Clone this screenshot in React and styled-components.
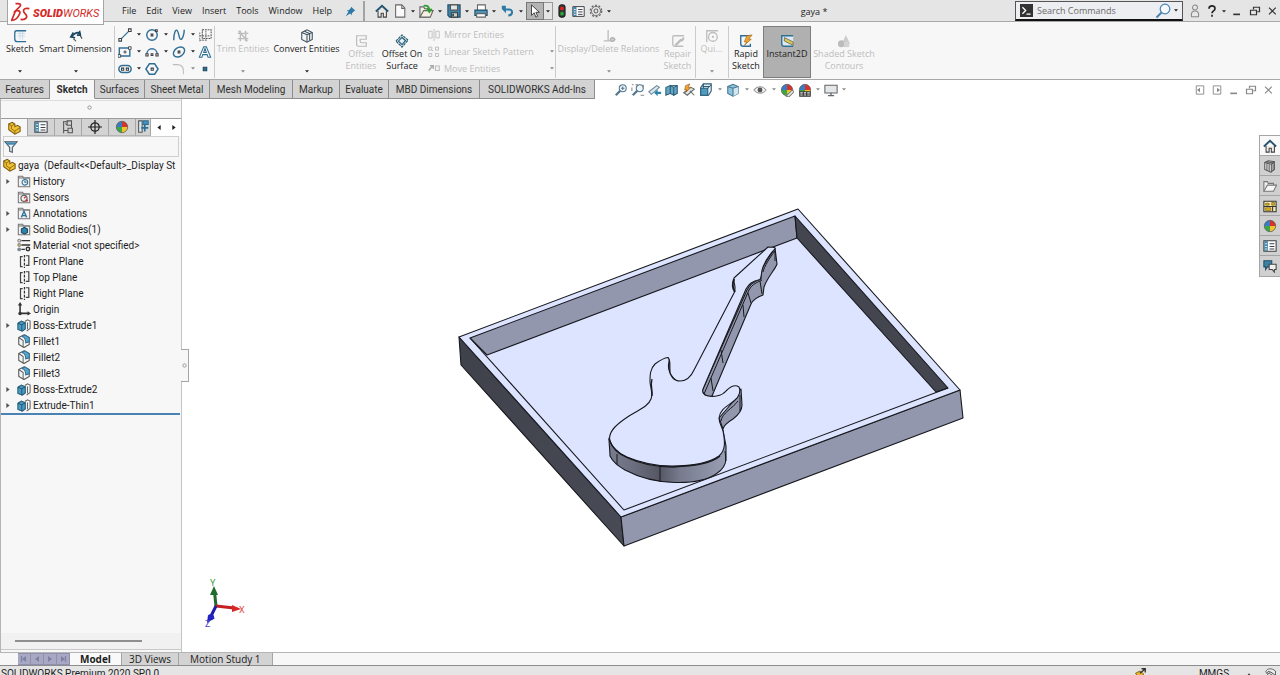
import React from 'react';
import styled, { createGlobalStyle, css } from 'styled-components';

const ui = '"Open Sans", "Noto Sans", sans-serif';
const body = 'Roboto, "Noto Sans", sans-serif';
const blue = '#2f6f96';
const dark = '#3b3f44';
const dim = '#bdbdbd';

const GlobalStyle = createGlobalStyle`
  *, *::before, *::after { box-sizing: border-box; }
  html, body { margin: 0; height: 100%; overflow: hidden; }
  body { background: #fff; color: #1c1c1c; font-family: ${body}; font-size: 10px; }
  button, input { font: inherit; color: inherit; margin: 0; padding: 0; border: 0; background: none; }
  ul { list-style: none; margin: 0; padding: 0; }
  svg { display: block; flex: none; }
`;

const Shell = styled.div`
  display: flex;
  flex-direction: column;
  height: 100vh;
  overflow: hidden;
`;

/* ---------- title bar ---------- */
const TitleBar = styled.header`
  position: relative;
  display: flex;
  align-items: center;
  flex: none;
  height: 22px;
  padding: 1px 0 0 117px;
  background: #e5e5e5;
  border-bottom: 1px solid #a8a8a8;
  font-family: ${ui};
  font-size: 9px;
`;
const Logo = styled.a`
  position: absolute;
  z-index: 2;
  left: 7px;
  top: 0;
  width: 97px;
  height: 25px;
  display: flex;
  align-items: center;
  gap: 3px;
  padding-left: 3px;
  background: #fff;
  border: 1px solid #a5a5a5;
  border-top: 0;
  color: #d42a26;
  text-decoration: none;
  font: italic 11px/24px Roboto, sans-serif;
  span { padding-top: 3px; }
  b { font-weight: 900; }
`;
const Menu = styled.nav`
  display: flex;
  flex: none;
  button { padding: 0 5px; line-height: 20px; }
`;
const QuickTools = styled.div`
  display: flex;
  align-items: center;
  flex: none;
  height: 20px;
  padding-left: 8px;
  border-left: 2px solid #a3a3a3;
`;
const IconButton = styled.button`
  display: flex;
  align-items: center;
  justify-content: center;
  flex: none;
  width: ${(p) => p.$w || 18}px;
  height: ${(p) => p.$h || 18}px;
  ${(p) => p.$on && css`background: #b4b4b4; border: 1px solid #777;`}
  ${(p) => p.$boxed && css`border: 1px solid #999; border-left: 0;`}
`;
const DocTitle = styled.h1`
  flex: 1;
  margin: 0;
  text-align: center;
  font-size: 9px;
  font-weight: 400;
`;
const Search = styled.form`
  display: flex;
  align-items: center;
  flex: none;
  width: 168px;
  height: 20px;
  padding: 0 2px 0 4px;
  background: #eceef1;
  border: 1px solid #555;
  border-bottom: 2px solid #111;
  input { flex: 1; min-width: 0; padding-left: 4px; outline: 0; }
  input::placeholder { color: #6b6b6b; opacity: 1; }
`;
const WindowTools = styled.div`
  display: flex;
  align-items: center;
  flex: none;
  padding-left: 3px;
`;

/* ---------- ribbon ---------- */
const Ribbon = styled.section`
  display: flex;
  flex: none;
  height: 58px;
  padding-top: 4px;
  padding-left: 2px;
  background: #f7f7f7;
  border-bottom: 1px solid #a8a8a8;
  font-family: ${ui};
  font-size: 9px;
`;
const Group = styled.div`
  display: flex;
  flex: none;
  height: 52px;
  padding-right: ${(p) => p.$pad || 1}px;
  margin-right: 1px;
  gap: 1px;
  border-right: ${(p) => (p.$last ? 0 : 1)}px solid #cbcbcb;
`;
const BigTool = styled.button`
  display: flex;
  flex-direction: column;
  align-items: center;
  width: ${(p) => p.$w}px;
  height: 52px;
  padding-top: ${(p) => (p.$tall ? 8 : 3)}px;
  color: ${(p) => (p.$off ? dim : '#1c1c1c')};
  line-height: 12px;
  white-space: nowrap;
  ${(p) => p.$on && css`background: #b0b0b0; border: 1px solid #7d7d7d; padding-top: 7px;`}
`;
const ToolLabel = styled.span`
  white-space: pre;
`;
const ToolArrow = styled.span`
  margin-top: auto;
  padding-bottom: 5px;
`;
const SketchGrid = styled.div`
  display: grid;
  grid-template-columns: 18px 9px 18px 9px 18px 9px 16px;
  grid-template-rows: repeat(3, 17px);
  align-items: center;
  justify-items: center;
`;
const SmallList = styled.div`
  display: grid;
  grid-template-rows: repeat(3, 17px);
  width: 129px;
  padding-left: 3px;
`;
const SmallTool = styled.button`
  display: flex;
  align-items: center;
  gap: 4px;
  color: ${dim};
  text-align: left;
  white-space: nowrap;
  span { flex: 1; }
`;

/* ---------- command tabs ---------- */
const TabRow = styled.div`
  display: flex;
  flex: none;
  height: 19px;
`;
const CommandTab = styled.button`
  flex: none;
  width: ${(p) => p.$w}px;
  height: 19px;
  padding-top: 1px;
  line-height: 17px;
  text-align: center;
  color: #303030;
  background: ${(p) => (p.$on ? '#f7f7f7' : '#d3d3d3')};
  font-weight: ${(p) => (p.$on ? 700 : 400)};
  border-right: 1px solid #8d8d8d;
  border-bottom: 1px solid ${(p) => (p.$on ? '#f7f7f7' : '#8d8d8d')};
`;
const ViewTools = styled.div`
  display: flex;
  align-items: center;
  flex: 1;
  padding-left: 17px;
`;
const DocTools = styled.div`
  display: flex;
  align-items: center;
  flex: none;
  padding-right: 4px;
`;

/* ---------- workspace ---------- */
const Workspace = styled.div`
  display: flex;
  flex: 1;
  min-height: 0;
`;
const Panel = styled.aside`
  position: relative;
  display: flex;
  flex-direction: column;
  flex: none;
  width: 182px;
  background: #f7f7f7;
  border-left: 1px solid #b5b5b5;
  border-right: 1px solid #c4c4c4;
`;
const Grip = styled.div`
  display: flex;
  align-items: center;
  justify-content: center;
  height: 19px;
  margin-top: 1px;
  border-top: 1px solid #dedede;
  border-bottom: 1px solid #9d9d9d;
  padding: 0 3px 4px 0;
`;
const PanelTabs = styled.div`
  display: flex;
  height: 17px;
`;
const PanelTab = styled.button`
  display: flex;
  align-items: center;
  justify-content: center;
  flex: ${(p) => (p.$cut ? '1 1 0' : '0 0 27px')};
  min-width: 0;
  overflow: hidden;
  background: ${(p) => (p.$on ? '#f7f7f7' : '#d3d3d3')};
  border-right: 1px solid #a5a5a5;
  border-bottom: ${(p) => (p.$on ? 0 : 1)}px solid #b5b5b5;
`;
const Pager = styled.button`
  display: flex;
  align-items: center;
  justify-content: center;
  width: 15px;
  background: #fff;
`;
const Filter = styled.label`
  display: flex;
  align-items: center;
  height: 21px;
  margin: 0 2px;
  border: 1px solid #cfcfcf;
  input { flex: 1; min-width: 0; outline: 0; }
`;
const Tree = styled.ul`
  overflow: hidden;
  border-bottom: 2px solid #4883b4;
  margin-right: 1px;
`;
const TreeRow = styled.li`
  display: flex;
  align-items: center;
  height: 16px;
  gap: 2px;
  padding-left: ${(p) => (p.$root ? 1 : 2)}px;
  white-space: pre;
`;
const Twist = styled.span`
  display: flex;
  justify-content: center;
  flex: none;
  width: 10px;
  margin-right: 2px;
`;
const ScrollTrack = styled.div`
  margin-top: auto;
  height: 17px;
  padding: 7px 39px 0 14px;
  background: #f1f1f1;
  border-bottom: 1px solid #c9c9c9;
  margin-bottom: 2px;
`;
const ScrollThumb = styled.div`
  height: 2px;
  background: #8f8f8f;
`;
const Splitter = styled.button`
  position: absolute;
  z-index: 1;
  right: -8px;
  top: 250px;
  width: 8px;
  height: 33px;
  display: flex;
  align-items: center;
  justify-content: center;
  background: #f7f7f7;
  border: 1px solid #a5a5a5;
  border-left: 0;
`;
const Canvas = styled.main`
  position: relative;
  flex: 1;
  min-width: 0;
  background: #fff;
`;
const ModelView = styled.svg`
  width: 100%;
  height: 100%;
`;
const Triad = styled.svg`
  position: absolute;
  left: 18px;
  bottom: 20px;
`;
const TaskPane = styled.nav`
  position: absolute;
  right: 0;
  top: 36px;
  display: flex;
  flex-direction: column;
  border: 1px solid #a5a5a5;
  border-right: 0;
`;
const TaskTab = styled.button`
  display: flex;
  align-items: center;
  justify-content: center;
  width: 20px;
  height: 20px;
  background: ${(p) => (p.$on ? '#f9f9f9' : '#d0d0d0')};
  border-bottom: 1px solid #a5a5a5;
  &:last-child { border-bottom: 0; }
`;

/* ---------- bottom ---------- */
const BottomTabs = styled.div`
  display: flex;
  flex: none;
  height: 14px;
  padding-left: 18px;
  background: #f7f7f7;
  border-top: 1px solid #b5b5b5;
  border-bottom: 1px solid #8d8d8d;
  font-family: ${ui};
`;
const NavButton = styled.button`
  display: flex;
  align-items: center;
  justify-content: center;
  width: 13px;
  background: #a8a8c4;
  border: 1px solid #8f8fae;
  border-left: 0;
`;
const SheetTab = styled.button`
  padding: 0 ${(p) => p.$pad}px;
  line-height: 12px;
  background: ${(p) => (p.$on ? '#f9f9f9' : '#d3d3d3')};
  font-weight: ${(p) => (p.$on ? 700 : 400)};
  border-right: 1px solid #a5a5a5;
`;
const StatusBar = styled.footer`
  display: flex;
  flex: none;
  align-items: flex-start;
  height: 9px;
  padding: 2px 0 0 1px;
  overflow: hidden;
  background: #e5e5e5;
  line-height: 12px;
  span { flex: 1; }
`;
const Units = styled.button`
  width: 44px;
  margin-left: 46px;
  line-height: 12px;
`;

/* ---------- drawings ---------- */
const Svg = ({ s = 14, vb = 16, children }) => (
  <svg width={s} height={s} viewBox={`0 0 ${vb} ${vb}`} fill="none" stroke={dark} strokeWidth="1.2" aria-hidden="true">
    {children}
  </svg>
);
const Caret = ({ c = '#222' }) => (
  <svg width="4" height="3" viewBox="0 0 6 4" aria-hidden="true"><path d="M0 0h6L3 3.6z" fill={c} /></svg>
);
const Play = ({ left, c = '#222' }) => (
  <svg width="4" height="5" viewBox="0 0 4 6" aria-hidden="true"><path d={left ? 'M4 0v6L0 3z' : 'M0 0v6l4-3z'} fill={c} /></svg>
);

const Home = ({ s = 14 }) => <Svg s={s}><path d="M3.500 8v7h3.500v-4.500h2.500V15H13V8" fill="#f4efe6" /><path d="M1 8.500 8 2l7 6.500" stroke="#24536f" strokeWidth="2.200" /></Svg>;
const Doc = () => <Svg><path d="M3 1h7l3.500 3.500V15H3z" fill="#fafafa" stroke="#666" /><path d="M10 1v4h3.500" stroke="#666" /></Svg>;
const Open = () => <Svg s={15}><path d="M1 14V3h4l1 2h5v9z" fill="#f5f1e2" stroke="#666" /><path d="M1 14 5 7h10l-3 7z" fill="#f5f1e2" stroke="#666" /><path d="M5 2c4-1 6 1 6 5M8.500 5l2.500 3.500L13.500 5" stroke="#2f9e33" strokeWidth="2" /></Svg>;
const Save = () => <Svg><path d="M1 1h14v14H3l-2-2z" fill="#3c84aa" stroke="#244c63" /><path d="M4 1h8v6H4z" fill="#e4e4e4" stroke="#555" /><path d="M5 10h7v5H5z" fill="#d6d0c4" /><path d="M7 11v3" stroke="#244c63" strokeWidth="2" /></Svg>;
const Print = () => <Svg><path d="M4 7V1h9v6" fill="#fff" stroke="#666" /><path d="M1 7h14v6H1z" fill="#4b93b8" stroke="#244c63" /><path d="M3 11h10v4H3z" fill="#fff" stroke="#666" /></Svg>;
const Undo = () => <Svg s={13}><path d="M4 5.500h6c5 0 5 7-1 7.500" stroke="#2d7aa6" strokeWidth="2.400" /><path d="M6 1v9L1 5V1z" fill="#2d7aa6" stroke="none" /></Svg>;
const Cursor = () => <Svg><path d="M4 1v12l3-3 2 5 2-1-2-4.500h4z" fill="#fff" stroke="#333" strokeWidth="1" /></Svg>;
const Light = () => <Svg><rect x="4.500" y="1" width="7" height="14" rx="3" fill="#333" stroke="#222" /><circle cx="8" cy="5" r="2.200" fill="#e0261c" stroke="none" /><circle cx="8" cy="11" r="2.200" fill="#27a43a" stroke="none" /></Svg>;
const Props = ({ s = 14 }) => <Svg s={s}><path d="M1 2h14v12H1z" fill="#fff" /><path d="M1.500 2.500h4v11h-4z" fill="#3b82a8" stroke="none" /><path d="M7.500 5.500H13M7.500 8.500H13M7.500 11.500H13" /><path d="M2.500 5.500h2M2.500 8.500h2M2.500 11.500h2" stroke="#fff" /></Svg>;
const Gear = () => <Svg><circle cx="8" cy="8" r="6.500" stroke="#666" strokeWidth="1.500" strokeDasharray="2.200 1.900" /><circle cx="8" cy="8" r="5.200" stroke="#666" strokeWidth="1" /><circle cx="8" cy="8" r="2.200" stroke="#666" /></Svg>;
const Pin = () => <Svg s={11}><path d="m9 1 6 6-2 .5-3 3v3L7.500 11 1 15l4-6.500L2.500 6h3l3-3z" fill="#2d7aa6" stroke="none" /></Svg>;
const Prompt = () => <Svg s={13}><path d="M0 0h16v16H0z" fill="#333" stroke="none" /><path d="m3 4 4 4-4 4M8 12.500h5" stroke="#fff" strokeWidth="1.600" /></Svg>;
const Lens = () => <Svg s={16}><circle cx="10" cy="6" r="4.800" fill="#f4faff" stroke="#4b82ad" /><path d="m6.500 9.500-5 5" stroke="#4b82ad" strokeWidth="2" /></Svg>;
const Person = () => <Svg><circle cx="8" cy="4" r="2.800" fill="#e8e8e8" stroke="#888" /><path d="M4 14.500c-1-5 1.500-6.500 4-6.500s5 1.500 4 6.500z" fill="#e8e8e8" stroke="#888" /></Svg>;
const Minus = ({ c = '#333' }) => <Svg s={12}><path d="M3 12.500h9" stroke={c} strokeWidth="2.200" /></Svg>;
const Restore = ({ c = '#333' }) => <Svg s={12}><path d="M2 7h8v6H2z" stroke={c} strokeWidth="1.600" /><path d="M6 6V3h8v6h-3" stroke={c} strokeWidth="1.600" /></Svg>;
const Close = ({ c = '#333' }) => <Svg s={12}><path d="m4 3.500 9 9M13 3.500l-9 9" stroke={c} strokeWidth="1.500" /></Svg>;
const DockPane = ({ flip }) => <Svg s={12}><path d="M3 2.500h10v11H3z" stroke="#888" /><path d={flip ? 'M8 5v6l4-3z' : 'M8 5v6L4 8z'} fill="#888" stroke="none" /></Svg>;

const SketchI = () => <Svg><path d="M5 5h9M5 8h9M8 2v10M11 2v10" stroke="#b9d3e2" strokeWidth=".8" /><path d="M15 2H4c-2 0-2 1-2 3v6c0 3 1 3.500 3 3.500h10" stroke={blue} strokeWidth="1.500" /></Svg>;
const DimI = () => <Svg><path d="M3 9c3-5 8-6 10-3" stroke="#1d4861" strokeWidth="2" /><path d="M5 4 2 9l5 1M12 2l1 5-4 0" stroke="#1d4861" strokeWidth="1.800" /><path d="m5 11 3 3M13 8l2 3" stroke={dark} /></Svg>;
const LineI = () => <Svg><path d="m3 13 10-10" stroke={blue} strokeWidth="1.500" /><path d="M1 12h3v3H1zM12 1h3v3h-3z" fill="#fff" /></Svg>;
const CircleI = () => <Svg><circle cx="8" cy="8" r="6" stroke={blue} strokeWidth="1.600" /><path d="M7 7h2v2H7zM12 2h2v2h-2z" fill="#fff" /></Svg>;
const SplineI = () => <Svg><path d="M2 14C2 6 4 1 6 3s2 10 4 10 4-6 4-11" stroke={blue} strokeWidth="1.600" /></Svg>;
const PlaneGrid = () => <Svg><path d="M5 2h10v10H5z" stroke="#555" strokeDasharray="2 1" /><path d="M2 5v10M5 4v10M9 3v10M2 9h12M2 14h8" stroke="#777" strokeDasharray="2 1" /></Svg>;
const RectI = () => <Svg><path d="M1.500 3.500h12v9h-12z" stroke={blue} strokeWidth="1.600" /><path d="M7 7h2v2H7zM12 2h3v3h-3zM0 11h3v3H0z" fill="#fff" strokeWidth="1" /></Svg>;
const ArcI = () => <Svg><path d="M2 11C2 2 14 2 14 11" stroke={blue} strokeWidth="1.500" /><path d="M1 10h2.500v2.500H1zM12.500 10H15v2.500h-2.500zM7 10h2v2H7z" fill="#fff" /></Svg>;
const EllipseI = () => <Svg><ellipse cx="8" cy="8" rx="7" ry="5" transform="rotate(-35 8 8)" stroke={blue} strokeWidth="1.600" /><path d="M7 7h2v2H7z" fill="#fff" /></Svg>;
const LetterI = () => <Svg><path d="M1.500 14h3l1-3h5l1 3h3L9.500 2h-3zM6.500 8.500 8 4l1.500 4.500z" fill="#fff" stroke={blue} /></Svg>;
const SlotI = () => <Svg><rect x="1" y="4" width="14" height="8" rx="4" stroke={blue} strokeWidth="1.700" /><path d="M4 7h2.500v2.500H4zM9.500 7H12v2.500H9.500z" fill="#fff" /></Svg>;
const PolyI = () => <Svg><path d="M5 2h6l4 6-4 6H5L1 8z" stroke={blue} strokeWidth="1.700" /><path d="M7 7h2.500v2.500H7z" fill="#fff" /></Svg>;
const FilletSk = () => <Svg><path d="M1 3h5c5 0 7 3 7 7v4" stroke={dim} /></Svg>;
const PointI = () => <Svg><path d="M6 6h4v4H6z" fill="#2f6f96" stroke="#1d4861" /></Svg>;

const TrimI = () => <Svg><path d="M2 5h12M2 11h12M5 2v12M11 2v12M3 2l10 12" stroke={dim} strokeWidth="1.700" /></Svg>;
const Cube = () => <Svg><path d="m2 4 6-3 6 3v8l-6 3-6-3z" fill="#f5f5f5" stroke="#3b4f5c" /><path d="m2 4 6 2.500L14 4M8 6.500V15M5 2.500l6 2.700V13" stroke="#3b4f5c" /></Svg>;
const OffsetI = () => <Svg><path d="M3 2v10c0 1 1 2 2 2h9v-4H9c-1 0-2-1-2-2V6h7V2z" stroke={dim} strokeWidth="1.400" /></Svg>;
const SurfaceI = () => <Svg><path d="m1 8 7-7 7 6-7 8z" fill="#b9dbe9" stroke="#245065" strokeDasharray="3 1" /><path d="m4 8 4-4 4 3.500L8 12z" fill="#dff0f6" stroke="#245065" /></Svg>;
const MirrorI = () => <Svg s={12}><path d="M8 0v16M5.500 3v9H1V3zM10.500 3v9H15V3z" stroke={dim} /></Svg>;
const PatternI = () => <Svg s={12}><path d="M1 1.500h4v4H1zM10 1.500h4v4h-4zM1 10h4v4H1zM10 10h4v4h-4zM5 5l2 2M10 10 9 9" stroke={dim} strokeWidth="1.300" /></Svg>;
const MoveI = () => <Svg s={12}><path d="m1 10 5-6M2.500 3.500H7V8" stroke="#a9a9a9" strokeWidth="1.800" /><path d="M10 4h5v6h-5z" stroke={dim} strokeWidth="1.500" /></Svg>;
const RelI = () => <Svg><path d="M2 13.500h11M7 1v12" stroke={dim} strokeWidth="1.500" /><path d="M9 12c2-3 4-3 6 0-2 3-4 3-6 0" fill="#ccc" stroke="#aaa" /></Svg>;
const RepairI = () => <Svg><path d="M15 2H3c-1 0-1 1-1 2v8c0 2 1 2 2 2h10" stroke={dim} strokeWidth="1.500" /><path d="m5 13 6-6c2 1 3-1 3-3" stroke="#bbb" strokeWidth="2.500" /></Svg>;
const QuickI = () => <Svg><path d="M2 15V2h13" stroke={dim} strokeWidth="1.500" /><circle cx="9" cy="9" r="5" stroke={dim} strokeWidth="1.500" /><circle cx="9" cy="9" r="1.200" fill={dim} stroke="none" /></Svg>;
const RapidI = () => <Svg><path d="M13 2H2v9c0 2 1 3 3 3h8v-3" stroke={blue} strokeWidth="1.600" /><path d="M15 1 9 2 6 9h3l-3 4 8-7h-3z" fill="#f2a431" stroke="#9b5d16" strokeWidth=".7" /></Svg>;
const InstantI = () => <Svg><path d="M15 2H2v9c0 2 1 3 3 3h10" fill="#dcebf2" stroke={blue} strokeWidth="1.600" /><path d="m5 4 10 5v4L5 8z" fill="#d8c850" stroke="#555" strokeWidth=".8" /></Svg>;
const ShadeI = () => <Svg><path d="m10 1 5 10H6z" fill="#ccc" stroke="none" /><circle cx="5" cy="11" r="4" fill="#bcbcbc" stroke="none" /><path d="M8 9h6v6H8z" fill="#d4d4d4" stroke="none" /></Svg>;

const ZoomFit = ({ area }) => <Svg><circle cx="10" cy="6" r="4" fill="#eef6fb" stroke="#55788d" /><path d="M7 9 2 14" stroke="#55788d" strokeWidth="2.500" />{area && <path d="M1 2h2M5 2h3M14 2v4M15 14h-4M1 5v4" stroke="#888" />}{!area && <path d="M8 6h4M10 4v4" stroke="#55788d" />}</Svg>;
const PrevView = () => <Svg><path d="M1 10 10 3l3 2-9 8z" fill="#dce9f0" stroke="#6d8798" /><path d="m7 11 4-3.500V10h4v2.500h-4V15z" fill="#2e83ad" stroke="none" /></Svg>;
const Section = () => <Svg><path d="m1 5 5-2v9l-5 2zM6 3l4 2v9l-4-2zM10 5l4-2v9l-4 2z" fill="#62a7c8" stroke="#2c5b73" /><path d="M6 3h8" stroke="#2c5b73" /></Svg>;
const DynView = () => <Svg><path d="m2 11 8-6 4 2-8 7zM9 9l5 5" fill="#dce9f0" stroke="#666" /><path d="M9 1 4 3 3 8h3l-2 3 6-6H7z" fill="#f2a431" stroke="#8f5a18" strokeWidth=".7" /></Svg>;
const Orient = () => <Svg><path d="M5 1h9v8l-3 5H2V5z" fill="#e4f1f7" stroke="#2c5b73" /><path d="M2 6h8v8H2z" fill="#4f9cc2" stroke="#2c5b73" /><path d="M5 1v5M10 6l4-4M4 4h8" stroke="#2c5b73" /></Svg>;
const Shaded = () => <Svg><path d="m2 4 6-2.500L14 4v8l-6 3-6-3z" fill="#8dc3dc" stroke="#47778f" /><path d="M8 6v9l6-3V4z" fill="#cfe5ef" stroke="none" /><path d="m2 4 6 2 6-2M8 6v9" stroke="#47778f" /></Svg>;
const Eye = () => <Svg><path d="M1 8c4-5 10-5 14 0-4 5-10 5-14 0z" fill="#f3f3f3" stroke="#999" /><circle cx="8" cy="8" r="2.800" fill="#555" stroke="none" /></Svg>;
const Ball = ({ s = 14, extra }) => (
  <Svg s={s}>
    <path d="M8 8V1.500A6.500 6.500 0 0 0 1.500 8z" fill="#3a7cc4" stroke="none" /><path d="M8 8V1.500A6.500 6.500 0 0 1 14.500 8z" fill="#d8322a" stroke="none" />
    <path d="M8 8h6.500A6.500 6.500 0 0 1 8 14.500z" fill="#f0c52c" stroke="none" /><path d="M8 8H1.500A6.500 6.500 0 0 0 8 14.500z" fill="#3ba748" stroke="none" />
    <circle cx="8" cy="8" r="6.500" stroke="#555" strokeWidth=".8" />
    {extra === 'pen' && <path d="m7 15 7-7 2 2-6 6z" fill="#eee" stroke="#777" />}
    {extra === 'scene' && <path d="M2 10h12v5H2zM6 10v5M10 10v5M2 12.500h12" fill="#eee" stroke="#333" />}
  </Svg>
);
const Monitor = () => <Svg><path d="M1 2.500h14v9H1z" fill="#e4e7e9" stroke="#666" /><path d="M8 11v3M4.500 14.500h7" stroke="#666" strokeWidth="1.500" /></Svg>;

const Part = ({ s = 14 }) => <Svg s={s}><path d="M2 3.500 6 1.500l3 2v3l3-1.500 3 2v5L9 15 2 10z" fill="#f1c232" stroke="#7d5c10" /><path d="m2 3.500 3 2V9l4 2.500 6-4M5 5.500l4-2M9 11.500V15" stroke="#7d5c10" strokeWidth=".9" /></Svg>;
const Config = () => <Svg><path d="M3 1v14M3 2h5M3 12h5" stroke="#555" /><path d="M7 1h5v5H7zM8 9.500h5v5H8zM5 4l2 2h5v3" stroke="#555" /></Svg>;
const Target = () => <Svg><circle cx="8" cy="8" r="4.800" strokeWidth="1.500" stroke="#222" /><path d="M8 0v16M0 8h16" stroke="#222" strokeWidth="1.400" /></Svg>;
const CamI = () => <Svg><path d="M3 1h4v13H3z" fill="#dbe9f0" stroke="#555" /><path d="M8 1h6v4H8z" fill="#4895bd" stroke={blue} /><path d="M10 5v8M6 9h8" stroke={blue} strokeWidth="2" /></Svg>;
const Funnel = () => <Svg><path d="M1 2h14L9.500 8.500V14l-3-1V8.500z" fill="#e9eef2" stroke="#44545e" /><path d="M2 2.500h12l-2.500 3h-7z" fill="#3f8cb6" stroke="none" /></Svg>;

const Folder = ({ children }) => <Svg><path d="M1.500 14.500v-12h5l1 2h7v10z" fill="#f1f1f1" stroke="#777" /><path d="M1.500 4.500h13" stroke="#777" />{children}</Svg>;
const treeIcons = {
  History: <Folder><circle cx="9" cy="9.500" r="3.200" stroke={blue} /><path d="M9 7.500v2h2" stroke={blue} /></Folder>,
  Sensors: <Folder><circle cx="8" cy="9.500" r="3.500" stroke="#555" /><path d="m8 9.500 2-2" stroke="#d33" strokeWidth="1.500" /><circle cx="11" cy="12" r="1.500" fill="#b33" stroke="none" /></Folder>,
  Annotations: <Folder><path d="m5 13 3-7 3 7M6 11h4" stroke={blue} strokeWidth="1.500" /></Folder>,
  Bodies: <Folder><path d="m5 8 3.500-2L12 8v4l-3.500 2L5 12z" fill="#2e83ad" stroke="#1d4861" /></Folder>,
  Material: <Svg><path d="M5 3h10M5 8h10M5 13h4" stroke="#333" strokeWidth="1.500" /><circle cx="2.500" cy="3" r="1.600" fill="#ddd" stroke="#888" /><circle cx="2.500" cy="8" r="1.600" fill="#e5c342" stroke="#888" /><circle cx="2.500" cy="13" r="1.600" fill="#4b95b9" stroke="#888" /><circle cx="12.500" cy="12.500" r="2" stroke="#333" strokeWidth="1.600" /></Svg>,
  Plane: <Svg><path d="M6.500 3H4v11.500h2.500M10 2h3.500v11H10" stroke="#444" strokeWidth="1.400" /><path d="M8.500 1v15" stroke="#333" strokeDasharray="3 1.500" strokeWidth="1.400" /></Svg>,
  Origin: <Svg><path d="M3.500 2v11H13" stroke="#333" strokeWidth="1.800" /><path d="m1 4 2.500-4L6 4zM12 10.500l4 2.500-4 2.500z" fill="#333" stroke="none" /><circle cx="3.500" cy="13" r="2" fill="#333" stroke="none" /></Svg>,
  Extrude: <Svg><path d="M9 4 12 2l3 1.500V12l-4 3" fill="#f4f4f4" stroke="#666" /><path d="M12 5v8" stroke="#666" /><path d="m1 6 4-2.500 4.500 2v7L6 15l-5-2z" fill="#4b9dc4" stroke="#245a76" /><path d="m1 6 4.500 2 4-2.500M5.500 8v7" stroke="#245a76" /></Svg>,
  Fillet: <Svg><path d="m2 4 6-3 6 3v8l-6 3.500L2 12z" fill="#f5f5f5" stroke="#555" /><path d="M6 3 9 1l5 3v5l-4 1c0-4-1-6-4-7z" fill="#59a5ca" stroke={blue} /><path d="m2 4 5 3.500V15" stroke="#666" /></Svg>,
};
const treeRows = [
  ['History', 'History', true], ['Sensors', 'Sensors'], ['Annotations', 'Annotations', true],
  ['Solid Bodies(1)', 'Bodies', true], ['Material <not specified>', 'Material'], ['Front Plane', 'Plane'],
  ['Top Plane', 'Plane'], ['Right Plane', 'Plane'], ['Origin', 'Origin'], ['Boss-Extrude1', 'Extrude', true],
  ['Fillet1', 'Fillet'], ['Fillet2', 'Fillet'], ['Fillet3', 'Fillet'], ['Boss-Extrude2', 'Extrude', true],
  ['Extrude-Thin1', 'Extrude', true],
];

const taskIcons = [
  ['Resources', <Home />],
  ['Design Library', <Svg><path d="m2 4 4-2 7 1v9l-4 3-7-3z" fill="#eee" stroke="#555" /><path d="M4.500 5v8M7 5.500V14M9.500 6v9M2 4l7.500 2L13 3M4 3l7.500 1.500V13" stroke="#555" /></Svg>],
  ['File Explorer', <Svg><path d="M1 14V3h4l1 2h6v2" fill="#eee" stroke="#777" /><path d="M1 14 5 7h10.500l-3.500 7z" fill="#f6f6f6" stroke="#777" /></Svg>],
  ['View Palette', <Svg><path d="M1 2.500h14v12H1z" fill="#f5e9b5" stroke="#333" /><path d="M3 5h4v2H3zM10 4h3v3h-3zM3 10h6v3H3z" fill="#e3b51e" stroke="#7b6210" strokeWidth=".8" /><path d="M1 8.500h14M11 9v5" stroke="#333" /></Svg>],
  ['Appearances', <Ball />],
  ['Custom Properties', <Props />],
  ['Forum', <Svg><path d="M1 2h9v7H5l-2 3V9H1z" fill="#3b82a8" stroke="#244c63" /><path d="M7 6h8v6h-2v3l-2.500-3H7z" fill="#f0f0f0" stroke="#444" /></Svg>],
];

const commandTabs = [
  ['Features', 50], ['Sketch', 45], ['Surfaces', 50], ['Sheet Metal', 65], ['Mesh Modeling', 83],
  ['Markup', 47], ['Evaluate', 49], ['MBD Dimensions', 91], ['SOLIDWORKS Add-Ins', 115],
];

const Tool = ({ w, icon, label, off, tall, on, arrow }) => (
  <BigTool type="button" $w={w} $off={off} $tall={tall} $on={on}>
    {icon}
    <ToolLabel>{label}</ToolLabel>
    {arrow && <ToolArrow><Caret c={off ? '#888' : '#222'} /></ToolArrow>}
  </BigTool>
);
const SkBtn = ({ label, w = 18, children }) => <IconButton type="button" $w={w} $h={16} aria-label={label}>{children}</IconButton>;

const Model = () => (
  <ModelView viewBox="182 99 1098 553" role="img" aria-label="Tray with guitar body">
    <defs>
      <linearGradient id="bodySide" x1="610" x2="727" y1="0" y2="0" gradientUnits="userSpaceOnUse">
        <stop offset="0" stopColor="#777b8d" /><stop offset=".2" stopColor="#6b6e7e" /><stop offset=".42" stopColor="#555764" />
        <stop offset=".6" stopColor="#777b8d" /><stop offset="1" stopColor="#9a9fb6" />
      </linearGradient>
      <linearGradient id="leftWall" x1="459" y1="350" x2="623" y2="530" gradientUnits="userSpaceOnUse">
        <stop offset="0" stopColor="#3f414b" /><stop offset="1" stopColor="#484a55" />
      </linearGradient>
    </defs>
    <g stroke="#17181d" strokeWidth="1.100" strokeLinejoin="round">
      <path d="M459 337 461 365 624 546 621 517z" fill="url(#leftWall)" />
      <path d="M621 517 624 546 963 418 960 390z" fill="#9297ae" />
      <path d="M459 337 798 209 960 390 621 517z" fill="#dde4ff" />
      <path d="M470 338 795 216 797 238 487 355z" fill="#9297ae" />
      <path d="M795 216 948 388 936 392 797 238z" fill="#43454f" />
      <path d="M470 338 624 510 948 388" fill="none" />
      <path d="M609 438C609 445 610 450 610 456C613 462 617 465 625 470C640 478 655 482 675 482.500C695 483 707 480 716 474C724 469 726 464 726 458L726 446 723 430 700 440z" fill="url(#bodySide)" />
      <path d="M738 391 741 389 742 405C742 412 737 416 733 419C728 422 724 425 723 429L719 418 738 396z" fill="#9297ae" />
      <path d="M702 391 747 290C750 284 754 281 761 279L761 272C763 264 770 256 775 248L777 264C775 270 768 276 764 287L763 295C757 297 753 300 751 304L712 396C708 397 704 395 702 391z" fill="#9297ae" />
      <path d="M668 358C672 361 668 368 671 377L675 380C668 372 667 367 668 358z" fill="#555764" />
      <path d="M768 247 734 278C733 284 737 286 734 293L694 370C690 379 685 381 680 381C674 381 670 376 669 370C667 364 671 360 668 357.500C663 358 659 361 655 364C650 369 650 375 650 382C651 390 653 394 651 399C648 407 638 410 629 416C617 424 610 430 609.500 438C610 445 617 453 627 457C641 463 655 466 672 466C693 466 709 463 719 456C726 450 725 441 723 431C722 427 719 423 719 418C720 408 730 405 735 400C739 397 741 391 739 387C735 384 730 387 726 391C722 396 714 397 708 396C703 395 702 392 703 389L746 289C749 284 752 281 760 279.500C762 276 761 272 763 267C766 259 771 253 775 249C776 247 771 247 768 247z" fill="#dde4ff" />
      <path d="M617 454V464M660 466V482M725 451 726 461M721 421C722 413 733 408 738 401M740 395V411M704 394 749 290C752 284 758 282 762 280M711 378 713 391M721 350 723 363M743 305 744 317M748 293 751 303M760 281 762 294M763 272C764 267 770 257 775 251V261" fill="none" strokeWidth="1" />
      <path d="M734 279C732 284 733 289 735 292" fill="none" strokeWidth="2" />
      <path d="M652 379C650 386 653 390 652 396M609 439C612 448 618 454 628 458C643 465 658 467 673 467C693 466 711 464 720 456" fill="none" strokeWidth="1.300" />
    </g>
  </ModelView>
);

export default function App() {
  return (
    <Shell>
      <GlobalStyle />
      <TitleBar>
        <Logo href="#" aria-label="SOLIDWORKS">
          <svg width="19" height="20" viewBox="0 0 17 18" fill="none" stroke="#d42a26" strokeWidth="1.500" aria-hidden="true">
            <path d="M4 1.500c5-.5 6 1 2.500 4L4 8c4-1 5 1 3 4-1.500 3-4 4.500-6.500 4.500L4 8M16.500 6c-4-1-6 .5-5 3 1.500 2.500 4 3 2 5.500-1 1.300-3 1.500-5 1.200" />
          </svg>
          <span><b>SOLID</b>WORKS</span>
        </Logo>
        <Menu>
          {['File', 'Edit', 'View', 'Insert', 'Tools', 'Window', 'Help'].map((m) => <button key={m} type="button">{m}</button>)}
        </Menu>
        <IconButton type="button" $w={26} aria-label="Pin menu"><Pin /></IconButton>
        <QuickTools>
          <IconButton type="button" aria-label="Home"><Home /></IconButton>
          {[['New', <Doc />], ['Open', <Open />], ['Save', <Save />], ['Print', <Print />], ['Undo', <Undo />]].map(([n, ic]) => (
            <React.Fragment key={n}>
              <IconButton type="button" $w={17} aria-label={n}>{ic}</IconButton>
              <IconButton type="button" $w={10} aria-label={`${n} options`}><Caret /></IconButton>
            </React.Fragment>
          ))}
          <IconButton type="button" $on aria-label="Select"><Cursor /></IconButton>
          <IconButton type="button" $w={9} $boxed aria-label="Select options"><Caret /></IconButton>
          <IconButton type="button" $w={17} aria-label="Rebuild"><Light /></IconButton>
          <IconButton type="button" $w={17} aria-label="File properties"><Props s={13} /></IconButton>
          <IconButton type="button" aria-label="Options"><Gear /></IconButton>
          <IconButton type="button" $w={8} aria-label="Options list"><Caret /></IconButton>
        </QuickTools>
        <DocTitle>gaya *</DocTitle>
        <Search>
          <Prompt />
          <input aria-label="Search Commands" placeholder="Search Commands" />
          <IconButton type="button" aria-label="Search"><Lens /></IconButton>
          <IconButton type="button" $w={8} aria-label="Search scope"><Caret /></IconButton>
        </Search>
        <WindowTools>
          <IconButton type="button" aria-label="Account"><Person /></IconButton>
          <IconButton type="button" $w={16} aria-label="Help">
            <Svg s={12}><path d="M4 5c0-5 8-5 8-.5C12 8 8 7.500 8 11M8 13v2.500" stroke="#222" strokeWidth="2.200" /></Svg>
          </IconButton>
          <IconButton type="button" $w={8} aria-label="Help options"><Caret /></IconButton>
          <IconButton type="button" aria-label="Minimize"><Minus /></IconButton>
          <IconButton type="button" $w={17} aria-label="Restore"><Restore /></IconButton>
          <IconButton type="button" $w={17} aria-label="Close"><Close /></IconButton>
        </WindowTools>
      </TitleBar>

      <Ribbon>
        <Group $pad={2}>
          <Tool w={36} icon={<SketchI />} label="Sketch" arrow />
          <Tool w={73} icon={<DimI />} label="Smart Dimension" arrow />
        </Group>
        <Group>
          <SketchGrid>
            <SkBtn label="Line"><LineI /></SkBtn><Caret /><SkBtn label="Circle"><CircleI /></SkBtn><Caret /><SkBtn label="Spline"><SplineI /></SkBtn><Caret /><SkBtn label="Plane" w={16}><PlaneGrid /></SkBtn>
            <SkBtn label="Rectangle"><RectI /></SkBtn><Caret /><SkBtn label="Arc"><ArcI /></SkBtn><Caret /><SkBtn label="Ellipse"><EllipseI /></SkBtn><Caret /><SkBtn label="Text" w={16}><LetterI /></SkBtn>
            <SkBtn label="Slot"><SlotI /></SkBtn><Caret /><SkBtn label="Polygon"><PolyI /></SkBtn><i /><SkBtn label="Sketch fillet"><FilletSk /></SkBtn><Caret c="#888" /><SkBtn label="Point" w={16}><PointI /></SkBtn>
          </SketchGrid>
        </Group>
        <Group>
          <Tool w={54} icon={<TrimI />} label="Trim Entities" off arrow />
          <Tool w={71} icon={<Cube />} label="Convert Entities" arrow />
          <Tool w={36} icon={<OffsetI />} label={'Offset\nEntities'} off tall />
          <Tool w={44} icon={<SurfaceI />} label={'Offset On\nSurface'} tall />
          <SmallList>
            <SmallTool type="button"><MirrorI /><span>Mirror Entities</span></SmallTool>
            <SmallTool type="button"><PatternI /><span>Linear Sketch Pattern</span><Caret c="#888" /></SmallTool>
            <SmallTool type="button"><MoveI /><span>Move Entities</span><Caret c="#888" /></SmallTool>
          </SmallList>
        </Group>
        <Group>
          <Tool w={103} icon={<RelI />} label="Display/Delete Relations" off arrow />
          <Tool w={33} icon={<RepairI />} label={'Repair\nSketch'} off tall />
        </Group>
        <Group $pad={2}>
          <Tool w={29} icon={<QuickI />} label="Qui..." off arrow />
        </Group>
        <Group $last>
          <Tool w={32} icon={<RapidI />} label={'Rapid\nSketch'} tall />
          <Tool w={48} icon={<InstantI />} label="Instant2D" on />
          <Tool w={64} icon={<ShadeI />} label={'Shaded Sketch\nContours'} off tall />
        </Group>
      </Ribbon>

      <TabRow>
        {commandTabs.map(([t, w]) => <CommandTab key={t} type="button" $w={w} $on={t === 'Sketch'}>{t}</CommandTab>)}
        <ViewTools>
          {[['Zoom to fit', <ZoomFit />], ['Zoom to area', <ZoomFit area />], ['Previous view', <PrevView />], ['Section view', <Section />], ['Dynamic view', <DynView />]].map(([n, ic]) => (
            <IconButton key={n} type="button" $w={17} aria-label={n}>{ic}</IconButton>
          ))}
          {[['Orientation', <Orient />], ['Display style', <Shaded />], ['Hide items', <Eye />]].map(([n, ic]) => (
            <React.Fragment key={n}>
              <IconButton type="button" $w={18} aria-label={n}>{ic}</IconButton>
              <IconButton type="button" $w={9} aria-label={`${n} options`}><Caret c="#888" /></IconButton>
            </React.Fragment>
          ))}
          <IconButton type="button" aria-label="Edit appearance"><Ball extra="pen" /></IconButton>
          <IconButton type="button" $w={17} aria-label="Apply scene"><Ball extra="scene" /></IconButton>
          <IconButton type="button" $w={9} aria-label="Scene options"><Caret c="#888" /></IconButton>
          <IconButton type="button" aria-label="View settings"><Monitor /></IconButton>
          <IconButton type="button" $w={8} aria-label="View settings options"><Caret c="#888" /></IconButton>
        </ViewTools>
        <DocTools>
          <IconButton type="button" $w={17} aria-label="Expand left"><DockPane /></IconButton>
          <IconButton type="button" $w={17} aria-label="Expand right"><DockPane flip /></IconButton>
          <IconButton type="button" $w={17} aria-label="Minimize document"><Minus c="#888" /></IconButton>
          <IconButton type="button" $w={17} aria-label="Restore document"><Restore c="#888" /></IconButton>
          <IconButton type="button" $w={17} aria-label="Close document"><Close c="#888" /></IconButton>
        </DocTools>
      </TabRow>

      <Workspace>
        <Panel>
          <Grip><Svg s={5} vb={6}><circle cx="3" cy="3" r="2" stroke="#999" /></Svg></Grip>
          <PanelTabs>
            <PanelTab type="button" $on aria-label="Feature tree"><Part /></PanelTab>
            <PanelTab type="button" aria-label="Property manager"><Props /></PanelTab>
            <PanelTab type="button" aria-label="Configurations"><Config /></PanelTab>
            <PanelTab type="button" aria-label="DimXpert"><Target /></PanelTab>
            <PanelTab type="button" aria-label="Display manager"><Ball /></PanelTab>
            <PanelTab type="button" $cut aria-label="CAM"><CamI /></PanelTab>
            <Pager type="button" aria-label="Previous tab"><Play left /></Pager>
            <Pager type="button" aria-label="Next tab"><Play /></Pager>
          </PanelTabs>
          <Filter><Funnel /><input aria-label="Filter tree" /></Filter>
          <Tree>
            <TreeRow $root><Part />gaya  (Default&lt;&lt;Default&gt;_Display St</TreeRow>
            {treeRows.map(([t, ic, open]) => (
              <TreeRow key={t}><Twist>{open && <Play c="#555" />}</Twist>{treeIcons[ic]}{t}</TreeRow>
            ))}
          </Tree>
          <ScrollTrack><ScrollThumb /></ScrollTrack>
          <Splitter type="button" aria-label="Collapse panel"><Svg s={5} vb={6}><circle cx="3" cy="3" r="2" stroke="#999" /></Svg></Splitter>
        </Panel>
        <Canvas>
          <Model />
          <Triad width="48" height="56" viewBox="200 576 48 56" role="img" aria-label="Axes">
            <path d="M216 606 214.500 592" stroke="#1f6b2a" strokeWidth="3" /><path d="m214 586-4 9h8z" fill="#1f6b2a" />
            <path d="m216 606 18 2" stroke="#c4201f" strokeWidth="3" /><path d="m241 609-9-4v7z" fill="#d8282a" />
            <path d="m216 606-5 10" stroke="#1c1ca8" strokeWidth="3" /><path d="m207 623 1-8 7 3z" fill="#1c1ca8" /><circle cx="211" cy="617" r="3" fill="#2424c4" />
            <g fontFamily={body} fontSize="9"><text x="210" y="586" fill="#3a9b45">Y</text><text x="239" y="613" fill="#e04a4a">X</text><text x="205" y="627" fill="#4a4ad0">Z</text></g>
          </Triad>
          <TaskPane>
            {taskIcons.map(([n, ic], i) => <TaskTab key={n} type="button" $on={i === 0} aria-label={n}>{ic}</TaskTab>)}
          </TaskPane>
        </Canvas>
      </Workspace>

      <BottomTabs>
        {['First', 'Previous', 'Next', 'Last'].map((n, i) => (
          <NavButton key={n} type="button" aria-label={n}>
            <Svg s={8} vb={8}><path d={i < 2 ? 'M6 1v6L2 4z' : 'M2 1v6l4-3z'} fill="#7f7fa3" stroke="none" />{i === 0 && <path d="M1.500 1v6" stroke="#7f7fa3" />}{i === 3 && <path d="M6.500 1v6" stroke="#7f7fa3" />}</Svg>
          </NavButton>
        ))}
        <SheetTab type="button" $on $pad={10}>Model</SheetTab>
        <SheetTab type="button" $pad={7}>3D Views</SheetTab>
        <SheetTab type="button" $pad={11}>Motion Study 1</SheetTab>
      </BottomTabs>
      <StatusBar>
        <span>SOLIDWORKS Premium 2020 SP0.0</span>
        <Svg s={12}><path d="m2 7 6-3 5 4-6 6z" fill="#e9b52a" stroke="#7d5c10" /><path d="m8 7 6-5M10 1h5v5" stroke="#333" strokeWidth="1.800" /></Svg>
        <Units type="button">MMGS</Units>
        <IconButton type="button" $w={26} $h={12} aria-label="Unit list"><svg width="4" height="3" viewBox="0 0 6 4" aria-hidden="true"><path d="M0 4h6L3 0z" fill="#333" /></svg></IconButton>
        <IconButton type="button" $h={12} aria-label="Tags"><Svg s={12}><path d="M1 5c2-5 8-5 13-1v7l-6 4z" fill="#eee" stroke="#555" /><circle cx="5" cy="6" r="1.500" /><path d="m7 5 6 4M7 8l5 3" /></Svg></IconButton>
      </StatusBar>
    </Shell>
  );
}
